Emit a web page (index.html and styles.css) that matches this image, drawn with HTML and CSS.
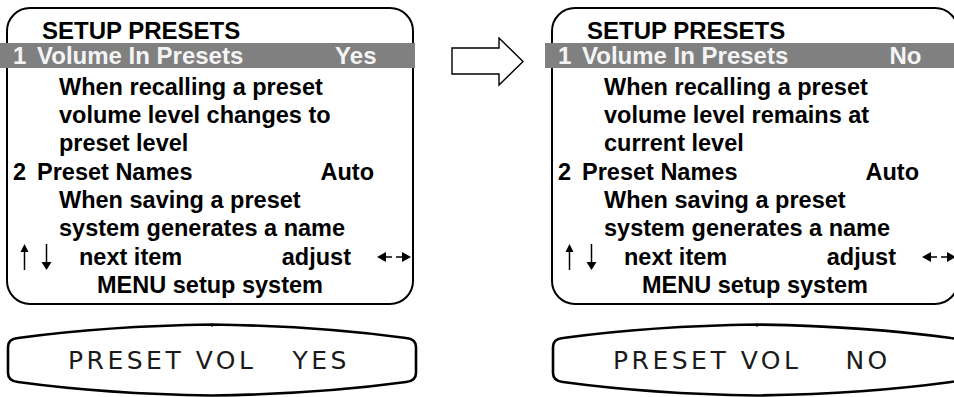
FILE: index.html
```html
<!DOCTYPE html>
<html>
<head>
<meta charset="utf-8">
<link rel="stylesheet" href="styles.css">
</head>
<body>
<div class="stage">
  <section class="panel">
    <div class="screen">
      <div class="title">SETUP PRESETS</div>
      <div class="row sel"><span class="num">1</span><span class="label">Volume In Presets</span><span class="val">Yes</span></div>
      <div class="desc">When recalling a preset</div>
      <div class="desc">volume level changes to</div>
      <div class="desc">preset level</div>
      <div class="row"><span class="num">2</span><span class="label">Preset Names</span><span class="val">Auto</span></div>
      <div class="desc">When saving a preset</div>
      <div class="desc">system generates a name</div>
      <div class="nav">
        <svg class="ud" width="36" height="28" viewBox="0 0 36 28"><path d="M4.5 5 V27" stroke="#000" stroke-width="1.5"/><path d="M0.5 9 L4.5 1 L8.5 9 Z" fill="#000"/><path d="M26.5 1 V21" stroke="#000" stroke-width="1.5"/><path d="M21.5 19 L31.5 19 L26.5 27 Z" fill="#000"/></svg>
        <span class="next">next item</span>
        <span class="adj">adjust</span>
        <svg class="lr" width="34" height="16" viewBox="0 0 34 16"><path d="M0 8 L9 3 L9 13 Z" fill="#000"/><path d="M9 8 H15" stroke="#000" stroke-width="1.5"/><path d="M19 8 H25" stroke="#000" stroke-width="1.5"/><path d="M34 8 L25 3 L25 13 Z" fill="#000"/></svg>
      </div>
      <div class="menu">MENU setup system</div>
    </div>
    <div class="lcd">
      <svg class="lcd-shape" width="412" height="74" viewBox="0 0 412 74"><path d="M2 24 Q2 16 12 15 Q100 3 206 1.5 Q312 3 400 15 Q410 16 410 24 L410 50 Q410 58 400 59 Q312 71 206 72.5 Q100 71 12 59 Q2 58 2 50 Z" fill="#fff" stroke="#000" stroke-width="2.6"/><path d="M206 1 V4" stroke="#000" stroke-width="1"/></svg>
      <span class="lcd-a">PRESET VOL</span><span class="lcd-b">YES</span>
    </div>
  </section>
  <div class="between">
    <svg width="80" height="54" viewBox="0 0 80 54"><path d="M1 11 H48 V1 L72 24.5 L48 48 V37 H1 Z" fill="#fff" stroke="#000" stroke-width="1.4" stroke-linejoin="miter"/></svg>
  </div>
  <section class="panel">
    <div class="screen">
      <div class="title">SETUP PRESETS</div>
      <div class="row sel"><span class="num">1</span><span class="label">Volume In Presets</span><span class="val">No</span></div>
      <div class="desc">When recalling a preset</div>
      <div class="desc">volume level remains at</div>
      <div class="desc">current level</div>
      <div class="row"><span class="num">2</span><span class="label">Preset Names</span><span class="val">Auto</span></div>
      <div class="desc">When saving a preset</div>
      <div class="desc">system generates a name</div>
      <div class="nav">
        <svg class="ud" width="36" height="28" viewBox="0 0 36 28"><path d="M4.5 5 V27" stroke="#000" stroke-width="1.5"/><path d="M0.5 9 L4.5 1 L8.5 9 Z" fill="#000"/><path d="M26.5 1 V21" stroke="#000" stroke-width="1.5"/><path d="M21.5 19 L31.5 19 L26.5 27 Z" fill="#000"/></svg>
        <span class="next">next item</span>
        <span class="adj">adjust</span>
        <svg class="lr" width="34" height="16" viewBox="0 0 34 16"><path d="M0 8 L9 3 L9 13 Z" fill="#000"/><path d="M9 8 H15" stroke="#000" stroke-width="1.5"/><path d="M19 8 H25" stroke="#000" stroke-width="1.5"/><path d="M34 8 L25 3 L25 13 Z" fill="#000"/></svg>
      </div>
      <div class="menu">MENU setup system</div>
    </div>
    <div class="lcd">
      <svg class="lcd-shape" width="412" height="74" viewBox="0 0 412 74"><path d="M2 24 Q2 16 12 15 Q100 3 206 1.5 Q312 3 400 15 Q410 16 410 24 L410 50 Q410 58 400 59 Q312 71 206 72.5 Q100 71 12 59 Q2 58 2 50 Z" fill="#fff" stroke="#000" stroke-width="2.6"/><path d="M206 1 V4" stroke="#000" stroke-width="1"/></svg>
      <span class="lcd-a">PRESET VOL</span><span class="lcd-b no">NO</span>
    </div>
  </section>
</div>
</body>
</html>
```

FILE: styles.css
```css
html, body {
  margin: 0;
  padding: 0;
  background: #fff;
  overflow: hidden;
}
body {
  width: 954px;
  height: 397px;
  font-family: "Liberation Sans", Arial, sans-serif;
  color: #000;
}
.stage {
  display: flex;
  padding: 7px 0 0 6px;
  width: 1100px;
}
.panel {
  display: flex;
  flex-direction: column;
  width: 412px;
  flex: none;
}
.screen {
  width: 408px;
  height: 298px;
  box-sizing: border-box;
  border: 2.5px solid #000;
  border-radius: 24px;
  padding-top: 10px;
  font-weight: bold;
  font-size: 23.5px;
}
.title {
  height: 24px;
  line-height: 24px;
  padding-left: 34px;
  font-size: 24px;
}
.row {
  display: flex;
  align-items: center;
  height: 28.4px;
  line-height: 28.4px;
}
.sel {
  background: #808080;
  color: #f4f4f4;
  height: 25px;
  line-height: 25px;
  margin: 0 -2.5px 4.5px -8px;
  padding-left: 8px;
  font-size: 24px;
}
.num {
  width: 24px;
  padding-left: 5px;
}
.label {
  flex: 1;
}
.val {
  padding-right: 38px;
}
.desc {
  height: 28.4px;
  line-height: 28.4px;
  padding-left: 51px;
  white-space: nowrap;
}
.nav {
  display: flex;
  align-items: center;
  height: 28.4px;
  line-height: 28.4px;
}
.ud {
  margin-left: 12px;
  flex: none;
}
.next {
  margin-left: 23px;
  flex: 1;
}
.lr {
  margin-left: 26px;
  margin-right: 1px;
  flex: none;
}
.menu {
  height: 28.4px;
  line-height: 28.4px;
  text-align: center;
}
.lcd {
  position: relative;
  margin-top: 18px;
  height: 74px;
  display: flex;
  align-items: center;
  font-family: "DejaVu Sans", Verdana, sans-serif;
  font-size: 25px;
  letter-spacing: 3.5px;
  color: #1a1a1a;
}
.lcd-shape {
  position: absolute;
  left: 0;
  top: 0;
}
.lcd-a, .lcd-b {
  position: relative;
}
.lcd-a {
  margin-left: 62px;
}
.lcd-b {
  margin-left: 36px;
}
.lcd-b.no {
  margin-left: 44px;
}
.between {
  width: 133px;
  flex: none;
  padding-top: 30px;
  padding-left: 33px;
  box-sizing: border-box;
}
```
